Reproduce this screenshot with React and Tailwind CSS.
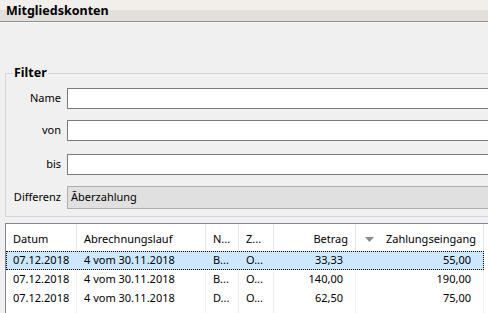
import React from 'react';

const cols = [
  { key: 'datum', label: 'Datum', w: 'w-[71px]', align: 'left' },
  { key: 'lauf', label: 'Abrechnungslauf', w: 'w-[129px]', align: 'left' },
  { key: 'n', label: 'N...', w: 'w-[33px]', align: 'left' },
  { key: 'z', label: 'Z...', w: 'w-[35px]', align: 'left' },
  { key: 'betrag', label: 'Betrag', w: 'w-[82px]', align: 'right' },
  { key: 'eingang', label: 'Zahlungseingang', w: 'w-[128px]', align: 'right', sort: true },
];

const rows = [
  { datum: '07.12.2018', lauf: '4 vom 30.11.2018', n: 'B...', z: 'O...', betrag: '33,33', eingang: '55,00' },
  { datum: '07.12.2018', lauf: '4 vom 30.11.2018', n: 'B...', z: 'O...', betrag: '140,00', eingang: '190,00' },
  { datum: '07.12.2018', lauf: '4 vom 30.11.2018', n: 'D...', z: 'O...', betrag: '62,50', eingang: '75,00' },
  { datum: '07.12.2018', lauf: '4 vom 30.11.2018', n: 'B...', z: 'O...', betrag: '140,00', eingang: '240,00' },
];

function FilterRow({ label, value, disabled, className }) {
  return (
    <div className={'flex items-center ' + className}>
      <div className="w-[55px] text-right pr-[1px]">{label}</div>
      <div
        className={
          'ml-[5px] flex-1 flex items-center px-[3px] border ' +
          (disabled
            ? 'h-[23px] bg-[#e0e0e0] border-[#adadad]'
            : 'h-[21px] bg-white border-[#7a7a7a]')
        }
      >
        {value}
      </div>
    </div>
  );
}

function headerClass(c) {
  if (c.sort) return 'justify-between pl-[9px] pr-[7px]';
  if (c.align === 'right') return 'justify-end pr-[7px]';
  return 'pl-[7px]';
}

export default function App() {
  return (
    <div
      className="w-[488px] h-[313px] overflow-hidden bg-[#f0f0f0] text-[11px] text-black"
      style={{ fontFamily: '"Noto Sans", "Liberation Sans", sans-serif' }}
    >
      {/* Title bar */}
      <div className="h-[22px] border-b border-[#8e8e8e] bg-[linear-gradient(#f1efec_0%,#f1efec_50%,#e3e0dc_50%,#e3e0dc_100%)] flex items-center pl-[6px] pt-[1px] font-bold text-[12.5px]">
        Mitgliedskonten
      </div>
      <div className="h-[1px] bg-[#f8f8f8]" />

      {/* Filter group */}
      <fieldset className="mt-[43px] ml-[5px] w-[520px] border border-[#d5d5d5] pl-[1px] pb-[7px]">
        <legend className="ml-[6px] px-[1px] font-bold text-[12.5px] leading-[14px]">Filter</legend>
        <FilterRow label="Name" className="mt-[8px]" />
        <FilterRow label="von" className="mt-[11px]" />
        <FilterRow label="bis" className="mt-[13px]" />
        <FilterRow label="Differenz" value="Ãberzahlung" disabled className="mt-[11px]" />
      </fieldset>

      {/* Table */}
      <div className="mt-[6px] ml-[5px] w-[520px] bg-white border-l border-t border-[#828790]">
        <div className="flex h-[27px]">
          {cols.map((c) => (
            <div
              key={c.key}
              className={c.w + ' h-full flex items-center pt-[3px] border-r border-[#e5e5e5] ' + headerClass(c)}
            >
              {c.sort && (
                <svg width="9" height="5" viewBox="0 0 9 5">
                  <path d="M0 0 L9 0 L4.5 5 Z" fill="#8a8a8a" />
                </svg>
              )}
              <span>{c.label}</span>
            </div>
          ))}
        </div>
        {rows.map((r, i) => (
          <div key={i} className="flex h-[19px]">
            <div
              className={
                'flex h-[19px] ' +
                (i === 0 ? 'bg-[#cce8ff] outline outline-1 outline-dotted outline-black -outline-offset-1' : '')
              }
            >
              {cols.map((c) => (
                <div
                  key={c.key}
                  className={
                    c.w +
                    ' flex items-center border-r ' +
                    (i === 0 ? 'border-transparent ' : 'border-[#f0f0f0] ') +
                    (c.align === 'right' ? 'justify-end pr-[12px]' : 'pl-[7px]')
                  }
                >
                  {r[c.key]}
                </div>
              ))}
            </div>
          </div>
        ))}
      </div>
    </div>
  );
}
